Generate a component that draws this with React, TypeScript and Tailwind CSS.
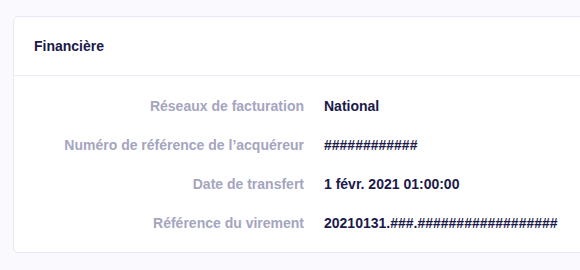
import React from 'react';

const rows = [
    { label: 'Réseaux de facturation', value: 'National' },
    { label: 'Numéro de référence de l’acquéreur', value: '############' },
    { label: 'Date de transfert', value: '1 févr. 2021 01:00:00' },
    { label: 'Référence du virement', value: '20210131.###.##################' },
];

export default function App() {
    return (
        <div className="min-h-[270px] bg-[#f9f9fe] pt-4 pl-[13px] font-['Liberation_Sans',Arial,sans-serif] overflow-hidden">
            {/* card runs past the right edge of the window */}
            <div className="w-[600px] bg-white border border-[#e8e8f4] rounded-[5px]">
                <div className="h-[59px] flex items-center pl-5 border-b border-[#ebebf7]">
                    <h3 className="text-[14px] font-bold text-[#1b1a4a]">Financière</h3>
                </div>
                <div className="grid grid-cols-[290px_1fr] gap-x-5 gap-y-[19px] pt-5 pb-[19px] text-[14px] font-bold leading-5">
                    {rows.map((row) => (
                        <React.Fragment key={row.label}>
                            <div className="text-right text-[#a5a5bf]">{row.label}</div>
                            <div className="text-[#1b1a4a]">{row.value}</div>
                        </React.Fragment>
                    ))}
                </div>
            </div>
        </div>
    );
}
